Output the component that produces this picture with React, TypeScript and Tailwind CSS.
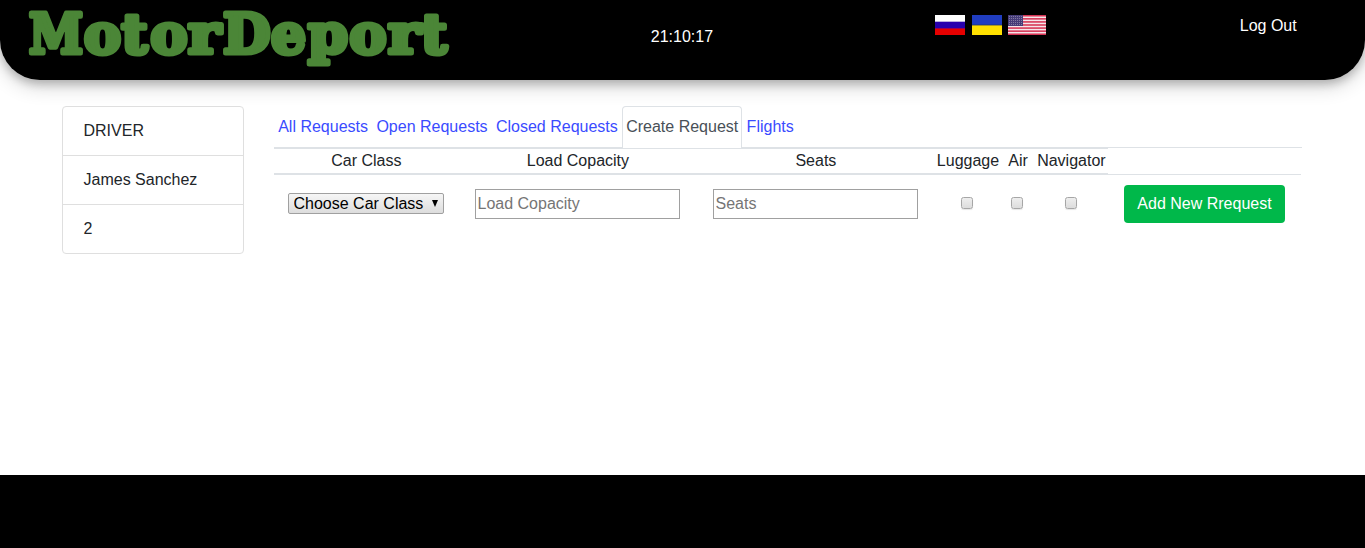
import React from "react";

const columns = "grid grid-cols-[184px_239px_237px_68px_32px_74px_193px]";

const people = ["DRIVER", "James Sanchez", "2"];

const tabs = [
  { label: "All Requests", active: false },
  { label: "Open Requests", active: false },
  { label: "Closed Requests", active: false },
  { label: "Create Request", active: true },
  { label: "Flights", active: false },
];

const headings = ["Car Class", "Load Copacity", "Seats", "Luggage", "Air", "Navigator"];

// Each letter of the word mark: character, left edge, advance width.
const letters: [string, number, number][] = [
  ["M", 5, 54],
  ["o", 60, 37],
  ["t", 97.5, 26],
  ["o", 126.5, 37],
  ["r", 164, 32.5],
  ["D", 199, 47.5],
  ["e", 247, 35],
  ["p", 284, 40],
  ["o", 325.5, 37],
  ["r", 364, 32.5],
  ["t", 397, 26],
];

function Logo() {
  return (
    <svg width="430" height="70" viewBox="0 0 430 70" className="ml-[24px] shrink-0">
      <text
        y="53.3"
        fontFamily="DejaVu Serif, serif"
        fontWeight="700"
        fontSize="54.5"
        fill="#4b8637"
        stroke="#4b8637"
        strokeWidth="5"
        strokeLinejoin="round"
      >
        {letters.map(([char, x, width]) => (
          <tspan key={x} x={x} textLength={width} lengthAdjust="spacingAndGlyphs">
            {char}
          </tspan>
        ))}
      </text>
    </svg>
  );
}

function Flags() {
  return (
    <div className="flex gap-[6px]">
      <svg width="30" height="20" viewBox="0 0 30 20" className="mr-px">
        <path fill="#fff" d="M0 0h30v6H0z" />
        <path fill="#b9aee0" d="M0 6h30v1H0z" />
        <path fill="#2700ad" d="M0 7h30v6H0z" />
        <path fill="#9b0050" d="M0 13h30v1H0z" />
        <path fill="#e60000" d="M0 14h30v6H0z" />
      </svg>
      <svg width="30" height="20" viewBox="0 0 30 20">
        <path fill="#203dc0" d="M0 0h30v9H0z" />
        <path fill="#1f3c9c" d="M0 9h30v1H0z" />
        <path fill="#a99827" d="M0 10h30v1H0z" />
        <path fill="#ffe000" d="M0 11h30v9H0z" />
      </svg>
      <svg width="38" height="20" viewBox="0 0 38 20">
        <path fill="#f5e6ea" d="M0 0h38v20H0z" />
        {[0, 1, 2, 3, 4, 5, 6].map((i) => (
          <rect key={i} y={(i * 40) / 13} width="38" height={20 / 13} fill="#d63354" />
        ))}
        <path fill="#463c78" d="M0 0h15v11H0z" />
        {[1, 3, 5, 7, 9].map((y) =>
          [1, 3, 5, 7, 9, 11, 13].map((x) => (
            <rect key={`${x}-${y}`} x={x} y={y} width="1" height="1" fill="#81799f" />
          )),
        )}
      </svg>
    </div>
  );
}

function Check({ label, shift = "" }: { label: string; shift?: string }) {
  return (
    <div className={`flex items-center justify-center pb-[2px] ${shift}`}>
      <input
        type="checkbox"
        aria-label={label}
        className="size-[12px] appearance-none rounded-[2.5px] border border-[#a6a6a6] bg-linear-to-b from-[#eeeeee] to-[#dcdcdc] shadow-[0_1px_1px_rgba(0,0,0,0.1)] checked:bg-gray-600"
      />
    </div>
  );
}

export default function App() {
  const field =
    "h-[30px] w-[205px] border border-[#a0a0a0] bg-white px-[1.5px] text-base text-black outline-none placeholder:text-[#757575]";
  return (
    <div className="flex h-[548px] flex-col overflow-hidden bg-white font-['Liberation_Sans',Arial,sans-serif] text-base text-[#212529]">
      <header className="flex h-20 shrink-0 items-start rounded-b-[40px] bg-black text-white shadow-[0_4px_8px_0_rgba(0,0,0,0.2),0_6px_20px_0_rgba(0,0,0,0.19)]">
        <Logo />
        <time className="ml-[196.8px] w-[284.2px] pt-[25px]">21:10:17</time>
        <div className="pt-[15px]">
          <Flags />
        </div>
        <a href="#" className="ml-auto pt-[14px] pr-[68.3px]">
          Log Out
        </a>
      </header>

      <main className="flex grow items-start pt-[26px] pl-[62px]">
        <ul className="w-[182px] rounded-[4px] border border-[#dfdfdf]">
          {people.map((item) => (
            <li
              key={item}
              className="h-[49px] border-b border-[#dfdfdf] pt-3 pl-[20.5px] last:h-12 last:border-b-0"
            >
              {item}
            </li>
          ))}
        </ul>

        <section className="ml-[30px] w-[1028px]">
          <nav className="flex h-[42px] border-b border-[#dee2e6]">
            {tabs.map((tab) => (
              <a
                key={tab.label}
                href="#"
                className={
                  tab.active
                    ? "h-[42px] rounded-t-[4px] border border-b-0 border-[#dee2e6] bg-white px-[3.2px] pt-2 whitespace-nowrap text-[#495057]"
                    : "h-[42px] px-[4.2px] pt-[9px] whitespace-nowrap text-[#3a4bff]"
                }
              >
                {tab.label}
              </a>
            ))}
          </nav>

          <div className={`${columns} h-[27px] w-[1027px] text-center`}>
            {headings.map((heading) => (
              <div
                key={heading}
                className="border-t border-b-2 border-[#dee2e6] pl-[0.8px] leading-6 whitespace-nowrap nth-[4]:pl-0 nth-[5]:pl-0"
              >
                {heading}
              </div>
            ))}
            <div className="border-b border-[#dee2e6]" />
          </div>

          <form className={`${columns} h-[58px] w-[1027px] items-center justify-items-center`}>
            <div className="relative mb-px">
              <select
                aria-label="Car Class"
                className="block h-[21px] w-[156px] appearance-none rounded-[2px] border border-[#a0a0a0] bg-linear-to-b from-[#f6f6f6] to-[#dddddd] pl-[4.5px] text-base leading-[19px] text-black"
              >
                <option>Choose Car Class</option>
              </select>
              <svg
                width="6"
                height="7"
                viewBox="0 0 6 7"
                className="pointer-events-none absolute top-[7px] right-[6px]"
              >
                <path d="M0 0h6L3 7z" fill="#000" />
              </svg>
            </div>
            <input className={field} placeholder="Load Copacity" aria-label="Load Copacity" />
            <input className={field} placeholder="Seats" aria-label="Seats" />
            <Check label="Luggage" shift="pr-[2px]" />
            <Check label="Air" shift="pr-[2px]" />
            <Check label="Navigator" />
            <button
              type="button"
              className="h-[38px] w-[161px] rounded-[4px] bg-[#00b84a] whitespace-nowrap text-white"
            >
              Add New Rrequest
            </button>
          </form>
        </section>
      </main>

      <footer className="h-[73px] shrink-0 bg-black" />
    </div>
  );
}
